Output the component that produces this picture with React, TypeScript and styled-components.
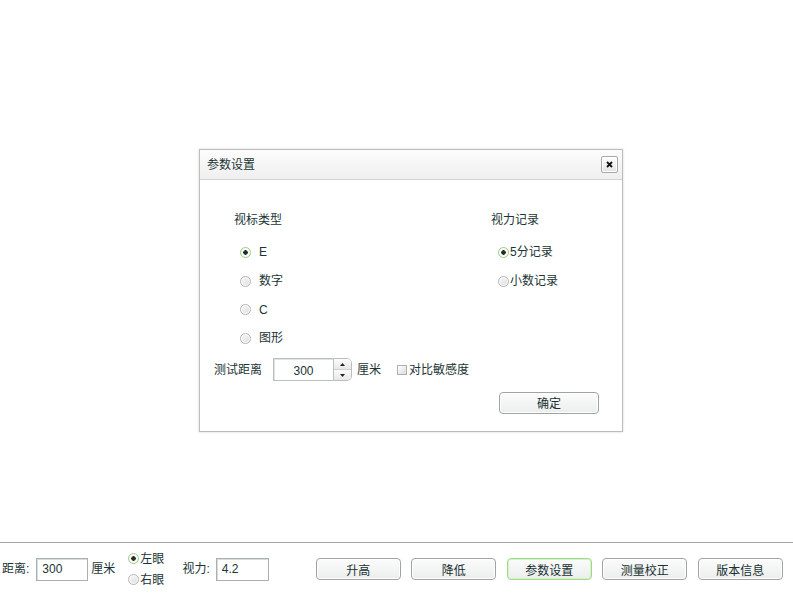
import React from "react";
import styled, { createGlobalStyle } from "styled-components";

const GlobalStyle = createGlobalStyle`
  html, body {
    margin: 0;
    padding: 0;
    background: #ffffff;
  }
  body {
    font-family: "Liberation Sans", "Noto Sans CJK SC", sans-serif;
    font-size: 12px;
    color: #1b3434;
  }
`;

const Page = styled.div`
  width: 793px;
  height: 598px;
  display: flex;
  flex-direction: column;
  overflow: hidden;
`;

const Stage = styled.div`
  height: 542px;
  box-sizing: border-box;
  padding: 149px 0 0 199px;
`;

const Dialog = styled.div`
  width: 424px;
  box-sizing: border-box;
  border: 1px solid #bdbdbd;
  background: #ffffff;
  box-shadow: 0 0 2px rgba(0, 0, 0, 0.18);
`;

const Header = styled.div`
  height: 29px;
  display: flex;
  align-items: center;
  justify-content: space-between;
  padding: 0 4px 0 7px;
  border-bottom: 1px solid #d3d3d3;
  background: linear-gradient(#fdfdfd, #efefef);
`;

const Title = styled.span`
  font-size: 12px;
  line-height: 16px;
`;

const CloseButton = styled.button`
  width: 17px;
  height: 17px;
  padding: 0;
  display: flex;
  align-items: center;
  justify-content: center;
  border: 1px solid #a8a8a8;
  border-radius: 2px;
  background: linear-gradient(#ffffff, #e4e4e4);
  box-shadow: inset 0 0 0 1px #ffffff;
`;

const Body = styled.div`
  padding: 32px 0 17px 0;
`;

const Columns = styled.div`
  display: flex;
`;

const Column = styled.div<{ $width?: number; $indent: number }>`
  width: ${(p) => (p.$width ? `${p.$width}px` : "auto")};
  box-sizing: border-box;
  padding-left: ${(p) => p.$indent}px;
`;

const GroupTitle = styled.div`
  line-height: 16px;
  margin-bottom: 10px;
`;

const RadioList = styled.div<{ $indent: number }>`
  padding-left: ${(p) => p.$indent}px;
`;

const RadioRow = styled.label<{ $gap: number; $height: number }>`
  display: flex;
  align-items: center;
  gap: ${(p) => p.$gap}px;
  height: ${(p) => p.$height}px;
  line-height: 16px;
`;

const RadioDot = styled.span<{ $checked?: boolean }>`
  width: 11px;
  height: 11px;
  flex: none;
  border-radius: 50%;
  box-sizing: border-box;
  border: 1px solid ${(p) => (p.$checked ? "#93cf80" : "#b4b4b4")};
  background: ${(p) =>
    p.$checked
      ? "radial-gradient(circle, #2b2b2b 0 2px, #f4f8f2 2.5px)"
      : "linear-gradient(135deg, #f8f8f8, #dedede)"};
  box-shadow: inset 0 0 0 1px #ffffff;
`;

const DistanceRow = styled.div`
  display: flex;
  align-items: center;
  height: 24px;
  margin-top: 5px;
  padding-left: 14px;
`;

const Label = styled.span<{ $gap?: number; $lead?: number }>`
  line-height: 16px;
  margin-left: ${(p) => p.$lead ?? 0}px;
  margin-right: ${(p) => p.$gap ?? 0}px;
`;

const Spin = styled.div`
  display: flex;
  align-items: stretch;
  height: 23px;
  margin-right: 5px;
`;

const SpinInput = styled.div`
  width: 60px;
  box-sizing: border-box;
  display: flex;
  align-items: center;
  justify-content: center;
  padding-top: 2px;
  border: 1px solid #b9bebe;
  border-right: none;
  box-shadow: inset 1px 1px 0 #e2e2e2;
  font-size: 12px;
`;

const SpinButtons = styled.div`
  width: 19px;
  box-sizing: border-box;
  display: flex;
  flex-direction: column;
  border: 1px solid #b9bebe;
  border-radius: 0 5px 5px 0;
  overflow: hidden;
`;

const SpinArrow = styled.div<{ $down?: boolean }>`
  flex: 1;
  display: flex;
  align-items: center;
  justify-content: center;
  background: linear-gradient(#fbfbfb, #e8e8e8);
  border-top: ${(p) => (p.$down ? "1px solid #cfcfcf" : "none")};
`;

const CheckBox = styled.span`
  width: 10px;
  height: 10px;
  margin: 0 2px 0 16px;
  box-sizing: border-box;
  border: 1px solid #b0b0b0;
  background: linear-gradient(135deg, #ffffff, #dcdcdc);
`;

const Footer = styled.div`
  display: flex;
  justify-content: flex-end;
  padding-right: 23px;
  margin-top: 10px;
`;

const Button = styled.button<{ $width: number; $active?: boolean }>`
  width: ${(p) => p.$width}px;
  height: 22px;
  padding: 0;
  font-family: "Liberation Sans", "Noto Sans CJK SC", sans-serif;
  font-size: 12px;
  color: #173030;
  border: 1px solid ${(p) => (p.$active ? "#9edb86" : "#9ea4a4")};
  border-radius: 4px;
  background: linear-gradient(#fbfbfb, #eceeee);
  box-shadow: inset 0 0 0 1px ${(p) => (p.$active ? "#d6f2cb" : "#ffffff")};
`;

const BottomBar = styled.div`
  flex: 1;
  display: flex;
  align-items: center;
  padding: 0 0 3px 2px;
  border-top: 1px solid #a6a6a6;
`;

const FieldBox = styled.div<{ $width: number }>`
  width: ${(p) => p.$width}px;
  height: 23px;
  box-sizing: border-box;
  display: flex;
  align-items: center;
  padding-left: 5px;
  border: 1px solid #a8b0b0;
  box-shadow: inset 1px 1px 0 #d9dcdc;
`;

const EyeGroup = styled.div`
  display: flex;
  flex-direction: column;
  margin: 0 18px 0 13px;
`;

const ButtonRow = styled.div`
  display: flex;
  gap: 10.5px;
  margin-left: 47px;
`;

const Radio = ({
  checked,
  gap,
  height,
  children,
}: {
  checked?: boolean;
  gap: number;
  height: number;
  children: React.ReactNode;
}) => (
  <RadioRow $gap={gap} $height={height}>
    <RadioDot $checked={checked} />
    <span>{children}</span>
  </RadioRow>
);

const optotypes = ["E", "数字", "C", "图形"];
const records = ["5分记录", "小数记录"];
const actions = ["升高", "降低", "参数设置", "测量校正", "版本信息"];

export default function App() {
  return (
    <Page>
      <GlobalStyle />
      <Stage>
        <Dialog>
          <Header>
            <Title>参数设置</Title>
            <CloseButton>
              <svg width="7" height="7" viewBox="0 0 7 7">
                <path d="M1 1L6 6M6 1L1 6" stroke="#111" strokeWidth="1.8" />
              </svg>
            </CloseButton>
          </Header>
          <Body>
            <Columns>
              <Column $width={291} $indent={34}>
                <GroupTitle>视标类型</GroupTitle>
                <RadioList $indent={6}>
                  {optotypes.map((t, i) => (
                    <Radio key={t} checked={i === 0} gap={8} height={28.7}>
                      {t}
                    </Radio>
                  ))}
                </RadioList>
              </Column>
              <Column $indent={0}>
                <GroupTitle>视力记录</GroupTitle>
                <RadioList $indent={7}>
                  {records.map((t, i) => (
                    <Radio key={t} checked={i === 0} gap={1} height={28.7}>
                      {t}
                    </Radio>
                  ))}
                </RadioList>
              </Column>
            </Columns>
            <DistanceRow>
              <Label $gap={11}>测试距离</Label>
              <Spin>
                <SpinInput>300</SpinInput>
                <SpinButtons>
                  <SpinArrow>
                    <svg width="5" height="3" viewBox="0 0 5 3">
                      <path d="M0 3L2.5 0L5 3Z" fill="#222" />
                    </svg>
                  </SpinArrow>
                  <SpinArrow $down>
                    <svg width="5" height="3" viewBox="0 0 5 3">
                      <path d="M0 0L2.5 3L5 0Z" fill="#222" />
                    </svg>
                  </SpinArrow>
                </SpinButtons>
              </Spin>
              <Label>厘米</Label>
              <CheckBox />
              <Label>对比敏感度</Label>
            </DistanceRow>
            <Footer>
              <Button $width={100}>确定</Button>
            </Footer>
          </Body>
        </Dialog>
      </Stage>
      <BottomBar>
        <Label $gap={7}>距离:</Label>
        <FieldBox $width={52}>300</FieldBox>
        <Label $lead={3}>厘米</Label>
        <EyeGroup>
          <Radio checked gap={1} height={21}>
            左眼
          </Radio>
          <Radio gap={1} height={21}>
            右眼
          </Radio>
        </EyeGroup>
        <Label $gap={6}>视力:</Label>
        <FieldBox $width={53}>4.2</FieldBox>
        <ButtonRow>
          {actions.map((a) => (
            <Button key={a} $width={85} $active={a === "参数设置"}>
              {a}
            </Button>
          ))}
        </ButtonRow>
      </BottomBar>
    </Page>
  );
}
